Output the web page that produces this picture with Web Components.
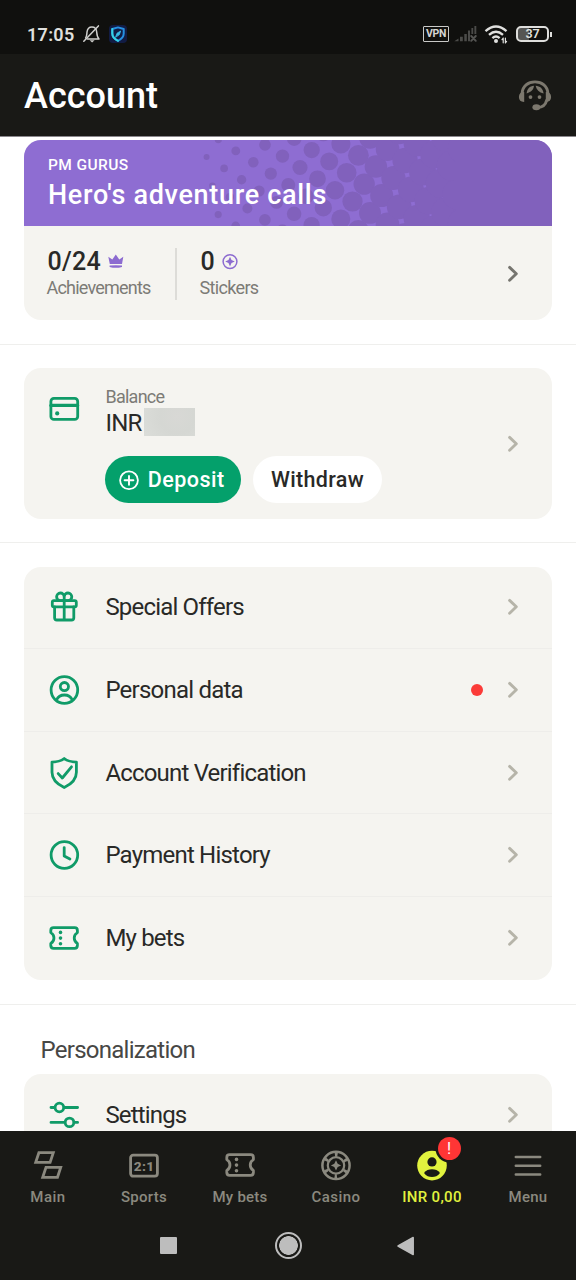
<!DOCTYPE html>
<html lang="en">
<head>
<meta charset="utf-8">
<title>Account</title>
<style>
html,body{margin:0;height:100%;background:#fff}
body{font-family:Roboto,"Open Sans",sans-serif;color:#292927;overflow:hidden}
</style>
</head>
<body>
<account-app></account-app>
<script>
const shadow=(el,html)=>{el.attachShadow({mode:"open"}).innerHTML=html;return el.shadowRoot;};

/* One line of text, tracked so that its advance equals the w attribute. */
customElements.define("ui-text",class extends HTMLElement{
  connectedCallback(){
    if(this.shadowRoot)return;
    const s=this.getAttribute("size"),w=+this.getAttribute("w"),wt=this.getAttribute("weight")||400,lh=this.getAttribute("lh")||s;
    const r=shadow(this,`<style>:host{display:block;flex:none;width:${w}px;height:${lh}px;white-space:nowrap}
      span{display:inline-block;font-size:${s}px;font-weight:${wt};line-height:${lh}px;vertical-align:top;font-kerning:normal}</style><span><slot></slot></span>`);
    const span=r.querySelector("span"),n=this.textContent.length;
    const nat=span.getBoundingClientRect().width;
    span.style.letterSpacing=((w-nat)/n).toFixed(3)+"px";
  }
});

const TICKET='<path d="M5.6 5.6H26.6Q29.4 5.6 29.4 8.4V10.6A6.2 6.2 0 0 0 29.4 21.4V23.6Q29.4 26.4 26.6 26.4H5.6Q2.8 26.4 2.8 23.6V21.4A6.2 6.2 0 0 0 2.8 10.6V8.4Q2.8 5.6 5.6 5.6Z"/><g fill="currentColor" stroke="none"><circle cx="12.5" cy="10.4" r="1.8"/><circle cx="12.5" cy="16.1" r="1.8"/><circle cx="12.5" cy="21.8" r="1.8"/></g>';
const ICONS={
  card:[32,32,'<rect x="2.9" y="5.4" width="26.8" height="21" rx="3"/><path d="M3 12.4H29.5" stroke-width="3.4"/><circle cx="9.2" cy="20.4" r="2.1" fill="currentColor" stroke="none"/>'],
  gift:[32,32,'<rect x="4.3" y="9.7" width="24" height="6.2" rx="1.6"/><path d="M6.6 15.9V26.7Q6.6 29 8.9 29H23.5Q25.8 29 25.8 26.7V15.9M16.2 9.7V29M16.2 9.6H12.2A3.8 3.8 0 1 1 16.2 5.6ZM16.2 9.6H20.2A3.8 3.8 0 1 0 16.2 5.6Z"/>'],
  person:[32,32,'<circle cx="16.4" cy="16" r="13.3"/><circle cx="16.4" cy="12.6" r="4.1"/><path d="M8.6 25.8C10.2 22.2 13 21 16.4 21S22.6 22.2 24.2 25.8"/>'],
  shield:[32,32,'<path d="M16.2 1.5C19.6 4.1 23.7 5 28.4 5.1V15.3C28.4 22.8 23.4 27.2 16.2 30.6C9 27.2 4 22.8 4 15.3V5.1C8.7 5 12.8 4.1 16.2 1.5Z"/><path d="M10.2 16.6L14.3 21L23.5 9.8"/>'],
  clock:[32,32,'<circle cx="16.4" cy="16" r="13.3"/><path d="M16.2 8.6V17L21.9 20.1"/>'],
  ticket:[32,32,TICKET],
  sliders:[32,32,'<path d="M3 8.5H6.7M16.2 8.5H29.6M3 23.4H16.7M26.2 23.4H29.6"/><circle cx="11.4" cy="8.5" r="4.3"/><circle cx="21.5" cy="23.4" r="4.3"/>'],
  chev:[12,18,'<path d="M2.6 2.4L9.3 8.8L2.6 15.2" stroke-width="2.9"/>'],
  crown:[16,16,'<path d="M.3 2.7L4.3 5.4L7.8 .6L11.3 5.4L15.3 2.7L14 10.1H1.8Z" fill="currentColor" stroke="none"/><path d="M1.6 11.6Q7.8 10.7 14 11.6V12.9Q7.8 14.7 1.6 12.9Z" fill="currentColor" stroke="none"/>'],
  sticker:[16,16,'<circle cx="8" cy="7.6" r="6.9" stroke-width="1.5"/><path d="M8 2.8L9.5 6.1L12.8 7.6L9.5 9.1L8 12.4L6.5 9.1L3.2 7.6L6.5 6.1Z" fill="currentColor" stroke="none"/>'],
  plus:[22,22,'<circle cx="11" cy="11.3" r="8.9" stroke-width="1.8"/><path d="M11 6.9V15.7M6.6 11.3H15.4" stroke-width="1.9"/>'],
  main:[32,32,'<path stroke-linejoin="miter" stroke-width="2.8" d="M6.9 3.7H21.3L18.1 13.4H3.7ZM14 18.4H28.7L25.5 28.3H10.7Z"/>'],
  sports:[32,32,'<rect x="2.6" y="6.2" width="26.8" height="21" rx="2.6"/><text x="16.1" y="21.5" text-anchor="middle" font-size="13.6" font-weight="800" letter-spacing=".3" fill="currentColor" stroke="none">2:1</text>'],
  casino:[32,32,'<circle cx="16" cy="16.4" r="13.6" stroke-width="2.5"/><circle cx="16" cy="16.4" r="8.2" stroke-width="2.2"/><circle cx="16" cy="16.4" r="10.9" stroke-width="4" stroke-dasharray="2.8 8.614" stroke-dashoffset="1.4" stroke-linecap="butt" transform="rotate(90 16 16.4)"/><path d="M16 11.3L17.7 14.7L21.1 16.4L17.7 18.1L16 21.5L14.3 18.1L10.9 16.4L14.3 14.7Z" fill="currentColor" stroke="none"/>'],
  user:[32,32,'<circle cx="16" cy="16.6" r="14.8" fill="currentColor" stroke="none"/><circle cx="16" cy="12.9" r="4.6" fill="#191916" stroke="none"/><path d="M8 23.9C10 21.3 12.8 20.3 16 20.3S22 21.3 24 23.9C21.6 26.9 19 27.9 16 27.9S10.4 26.9 8 23.9Z" fill="#191916" stroke="none"/>'],
  menu:[32,32,'<path d="M3.8 7.9H28.2M3.8 16.7H28.2M3.8 25.5H28.2" stroke-width="2.5"/>'],
  bell:[20,20,'<g stroke-width="1.5"><path d="M4.6 13.9C5.9 12.2 5.8 10.5 6 8C6.4 4.8 8.2 3.1 10.9 3.1C13.7 3.1 15.4 4.8 15.7 8C15.9 10.8 16 13 18 15H6.4"/><path d="M2.8 17.3L17.4 1.9"/></g><path d="M8.6 16.3H13.6L11.1 18.4Z" fill="currentColor" stroke="none"/>'],
  guard:[20,20,'<rect x="1" y="1" width="18" height="18" rx="4" fill="#121c44" stroke="none"/><path d="M10 3.4L15.7 5V9.6C15.7 13.1 13.6 15.2 10 16.8C6.4 15.2 4.3 13.1 4.3 9.6V5Z" stroke="#2590e2" stroke-width="2"/><path d="M4.3 5V9.6C4.3 13 6.4 15.2 10 16.8" stroke="#35d4e5" stroke-width="2"/><path d="M7.6 13L9 9.2L12.7 7L11.4 10.5Z" fill="#38bce9" stroke="#38bce9" stroke-width=".8"/>'],
  signal:[24,20,'<g fill="#4b4b49" stroke="none"><path d="M-.7 17.2L3.5 14.6V17.2ZM5 12.8H7.8V17.2H5ZM9.3 10H11.8V17.2H9.3ZM13 6.5H15V17.2H13ZM16.4 4.1H18.2V10H16.4ZM19.4 2H21.3V10H19.4Z"/></g><path d="M16.2 12L20.8 16.8M20.8 12L16.2 16.8" stroke="#555553" stroke-width="1.9"/>'],
  wifi:[26,20,'<g stroke-width="2.3" stroke-linecap="butt"><path d="M1.5 7.2Q12 -2.2 22.5 7.2"/><path d="M5 10.8Q12 4.6 19 10.8"/><path d="M8.4 14.1Q12 10.8 15.6 14.1"/></g><circle cx="12" cy="17" r="2" fill="currentColor" stroke="none"/><path d="M19.2 14V18.8M19.2 14.2L18 15.6M21.4 19V14.2M21.4 18.8L22.6 17.4" stroke-width="1.2"/>'],
  headset:[36,32,'<path d="M5 14.5C5.6 7 11 2.9 18 2.9S30.4 7 31 14.5" stroke-width="2.9"/><g fill="currentColor" stroke="none"><path d="M7.2 13V22.9Q2 23 1.9 18Q2 13.1 7.2 13ZM28.8 13V22.9Q34 23 34.1 18Q34 13.1 28.8 13Z"/><path d="M9.6 14.4C10.2 9.6 12.6 7 16.9 6.7C17 9.8 14.6 13 9.6 14.4ZM18.6 6.7C23 7 26 9.4 26.6 14.6C22.2 13.4 19.4 10.8 18.6 6.7Z"/><circle cx="13.5" cy="18.1" r="1.9"/><circle cx="22.5" cy="18.1" r="1.9"/><ellipse cx="19.4" cy="28.2" rx="4" ry="3"/></g><path d="M29.6 21.5C28.6 25.8 25.6 28.4 20.5 28.5" stroke-width="3"/>'],
};
customElements.define("ui-icon",class extends HTMLElement{
  connectedCallback(){
    if(this.shadowRoot)return;
    const [w,h,d]=ICONS[this.getAttribute("name")];
    shadow(this,`<style>:host{display:block;flex:none;width:${w}px;height:${h}px}svg{display:block;overflow:visible}</style>
    <svg width="${w}" height="${h}" viewBox="0 0 ${w} ${h}" fill="none" stroke="currentColor" stroke-width="2.8" stroke-linecap="round" stroke-linejoin="round">${d}</svg>`);
  }
});

customElements.define("status-bar",class extends HTMLElement{
  connectedCallback(){
    shadow(this,`<style>
    :host{display:flex;box-sizing:border-box;height:54px;background:#10100e;color:#e0e0de;padding:14px 24px 0 27px;align-items:center;flex:none}
    .time{padding-top:1px}
    .bell{margin-left:6px;color:#cfcfcd}.guard{margin-left:7px}
    .vpn{margin-left:auto;box-sizing:border-box;width:26px;height:16px;border:1.5px solid #c9c9c7;border-radius:1px;display:flex;align-items:center;justify-content:center;color:#d5d5d3}
    .sig{margin-left:6px}.wifi{margin-left:5px}
    .bat{margin-left:6px;box-sizing:border-box;width:33px;height:16px;border:2px solid #dededc;border-radius:5px;display:flex;align-items:center;justify-content:center;background:linear-gradient(90deg,#555553 0 11px,#10100e 11px)}
    .nub{width:2px;height:5px;background:#dededc;margin-left:1px}
    </style><ui-text class="time" size="18" weight="600" w="47.5">17:05</ui-text><ui-icon class="bell" name="bell"></ui-icon><ui-icon class="guard" name="guard"></ui-icon>
    <div class="vpn"><ui-text size="10.5" lh="12" weight="700" w="20">VPN</ui-text></div><ui-icon class="sig" name="signal"></ui-icon><ui-icon class="wifi" name="wifi"></ui-icon>
    <div class="bat"><ui-text size="12.5" lh="12" weight="600" w="14">37</ui-text></div><div class="nub"></div>`);
  }
});

customElements.define("page-header",class extends HTMLElement{
  connectedCallback(){
    shadow(this,`<style>:host{display:flex;box-sizing:border-box;height:83px;flex:none;background:#191916;border-bottom:1px solid #8a878c;padding:0 23px 0 24px;align-items:center;justify-content:space-between;color:#fff}
    .t{padding-top:2px}ui-icon{color:#7c786e}</style><div class="t"><slot></slot></div><ui-icon name="headset"></ui-icon>`);
  }
});

customElements.define("stat-item",class extends HTMLElement{
  connectedCallback(){
    shadow(this,`<style>:host{display:grid;row-gap:4px;align-content:start;padding-top:1px}
    .v{display:flex;align-items:center;gap:7px;height:25px;padding-left:1px}ui-icon{color:#8c6bd0}.l{color:#7c7b76}</style>
    <div class="v"><slot name="value"></slot><ui-icon name="${this.getAttribute("icon")}"></ui-icon></div><div class="l"><slot></slot></div>`);
  }
});

customElements.define("half-tone",class extends HTMLElement{
  connectedCallback(){
    let dots="";
    for(let i=-12;i<22;i++)for(let j=-12;j<22;j++){
      const x=182.6+i*29.2+j*17.5,y=17-6.1*i+11.35*j;
      if(x<181||x>445||y<-14||y>100)continue;
      dots+=`<circle cx="${x.toFixed(1)}" cy="${y.toFixed(1)}" r="${(3+(x-183)*.0488).toFixed(2)}"/>`;
    }
    shadow(this,`<style>:host{display:block;overflow:hidden}svg{display:block}</style><svg width="529" height="86" fill="#8161bc">${dots}<rect x="432" width="97" height="86"/></svg>`);
  }
});

customElements.define("promo-card",class extends HTMLElement{
  connectedCallback(){
    shadow(this,`<style>:host{display:block;height:180px;border-radius:17px;overflow:hidden;background:#f5f4f0}
    .b{height:86px;background:#8e6dd2;color:#fff;position:relative}
    half-tone{position:absolute;inset:0}
    .t{position:relative;padding:16px 0 0 24px;display:grid;row-gap:6px}
    .s{display:flex;padding-top:22px;padding-right:33px}
    .s>.a{padding-left:22.5px;width:128.5px}
    .ln{width:1.5px;height:52px;background:#dddcd8;margin-right:23px}
    ui-icon{margin:17px 0 0 auto;color:#76756f}</style>
    <div class="b"><half-tone></half-tone><div class="t"><slot name="eyebrow"></slot><slot name="title"></slot></div></div>
    <div class="s"><div class="a"><slot name="first"></slot></div><div class="ln"></div><slot name="second"></slot><ui-icon name="chev"></ui-icon></div>`);
  }
});

customElements.define("balance-card",class extends HTMLElement{
  connectedCallback(){
    shadow(this,`<style>:host{display:flex;box-sizing:border-box;height:151px;border-radius:17px;background:#f5f4f0;padding:0 33px 0 24px}
    .i{margin-top:25px;color:#109b68}.m{margin-left:25.4px;padding-top:20px}
    .lab{color:#7c7b76}.amt{display:flex;align-items:center;height:28px;gap:2px;margin-top:2px}
    .amt slot{display:block;padding-top:2px}
    .mask{width:51px;height:28px;background:radial-gradient(circle at 65% 30%,#d8d8d5,#d5d7d3 45%,#dbddd9 100%)}
    .btns{display:flex;gap:12px;margin-top:20px}
    .c{margin:67px 0 0 auto;color:#b6b4a9}</style>
    <ui-icon class="i" name="card"></ui-icon><div class="m"><div class="lab"><slot name="label"></slot></div>
    <div class="amt"><slot name="amount"></slot><div class="mask"></div></div><div class="btns"><slot></slot></div></div><ui-icon class="c" name="chev"></ui-icon>`);
  }
});

customElements.define("pill-button",class extends HTMLElement{
  connectedCallback(){
    const p=this.hasAttribute("primary");
    shadow(this,`<style>:host{display:flex;box-sizing:border-box;align-items:center;justify-content:center;height:47px;width:${p?135.6:129}px;border-radius:24px;background:${p?"#04a06b":"#fff"};color:${p?"#fff":"#292927"};gap:8px;padding:0 ${p?4:0}px 0 0}</style>
    ${p?'<ui-icon name="plus"></ui-icon>':''}<slot></slot>`);
  }
});

customElements.define("menu-row",class extends HTMLElement{
  connectedCallback(){
    shadow(this,`<style>:host{display:flex;box-sizing:border-box;height:82.6px;align-items:center;padding:0 33px 0 24px;border-bottom:1px solid #eeedea}
    :host(:last-child){border-bottom:0}.i{color:#109b68;margin-right:25.4px}.c{color:#b6b4a9}
    .r{margin-left:auto;display:flex;align-items:center;gap:24px}.dot{width:12px;height:12px;border-radius:50%;background:#fb3b38}</style>
    <ui-icon class="i" name="${this.getAttribute("icon")}"></ui-icon><slot></slot><div class="r">${this.hasAttribute("alert")?'<div class="dot"></div>':''}<ui-icon class="c" name="chev"></ui-icon></div>`);
  }
});

customElements.define("menu-list",class extends HTMLElement{
  connectedCallback(){shadow(this,`<style>:host{display:block;border-radius:17px;background:#f5f4f0;overflow:hidden}</style><slot></slot>`);}
});

customElements.define("page-section",class extends HTMLElement{
  connectedCallback(){shadow(this,`<style>:host{display:block;padding:23px 23.6px 24px 24px;border-bottom:1px solid #efefed}:host([first]){padding-top:3px}:host([tight]){padding-bottom:23px}:host([loose]){padding-top:23.6px}:host([last]){border:0;padding-top:22.4px}</style><slot></slot>`);}
});

customElements.define("nav-item",class extends HTMLElement{
  connectedCallback(){
    const a=this.hasAttribute("active");
    shadow(this,`<style>:host{display:flex;flex-direction:column;align-items:center;width:96px;padding-top:18px;gap:9px;color:${a?"#e1f23e":"#8b897f"}}
    .w{position:relative}.badge{position:absolute;left:22px;top:-12px;width:23px;height:23px;border-radius:50%;background:#ff3535;box-shadow:0 0 0 2.5px #191916;display:grid;place-items:center;color:#fff}</style>
    <div class="w"><ui-icon name="${this.getAttribute("icon")}"></ui-icon>${a?'<div class="badge"><ui-text size="16" w="5">!</ui-text></div>':''}</div><slot></slot>`);
  }
});

customElements.define("bottom-nav",class extends HTMLElement{
  connectedCallback(){
    shadow(this,`<style>:host{display:block;flex:none;height:149px;background:#191916}
    .n{display:flex;height:81px}.sys{box-sizing:border-box;display:flex;justify-content:center;align-items:center;height:67px;padding-right:3px;gap:95px}
    .sq{width:17px;height:17px;background:#bdbdbd;border-radius:1px;margin-left:1px}
    .ci{box-sizing:border-box;width:27px;height:27px;border-radius:50%;border:2px solid #bdbdbd;background:radial-gradient(circle,#bdbdbd 9px,#191916 9.6px);margin-left:3px}
    svg{display:block}</style>
    <div class="n"><slot></slot></div><div class="sys"><div class="sq"></div><div class="ci"></div><svg width="18" height="20"><path d="M16.2 1.5V18.5L1 10Z" fill="#bdbdbd" stroke="#bdbdbd" stroke-width="1.5" stroke-linejoin="round"/></svg></div>`);
  }
});

customElements.define("account-app",class extends HTMLElement{
  connectedCallback(){
    shadow(this,`<style>:host{display:flex;flex-direction:column;width:576px;height:1280px;overflow:hidden;background:#fff}
    main{flex:1;min-height:0;overflow:hidden}
    .h{color:#474745;padding:11px 0 12px 16.5px}</style>
    <status-bar></status-bar>
    <page-header><ui-text size="36" lh="42" weight="500" w="134">Account</ui-text></page-header>
    <main>
      <page-section first><promo-card>
        <ui-text slot="eyebrow" size="15.5" lh="19" weight="500" w="80.5">PM GURUS</ui-text>
        <ui-text slot="title" size="27" lh="28" weight="500" w="279">Hero's adventure calls</ui-text>
        <stat-item slot="first" icon="crown"><ui-text slot="value" size="25" weight="500" w="53.5">0/24</ui-text><ui-text size="18" lh="20" w="104">Achievements</ui-text></stat-item>
        <stat-item slot="second" icon="sticker"><ui-text slot="value" size="25" weight="500" w="14">0</ui-text><ui-text size="18" lh="20" w="59">Stickers</ui-text></stat-item>
      </promo-card></page-section>
      <page-section tight><balance-card>
        <ui-text slot="label" size="18" w="59">Balance</ui-text><ui-text slot="amount" size="24" w="36.2">INR</ui-text>
        <pill-button primary><ui-text size="21.5" lh="24" weight="500" w="77">Deposit</ui-text></pill-button>
        <pill-button><ui-text size="21.5" lh="24" weight="500" w="93">Withdraw</ui-text></pill-button>
      </balance-card></page-section>
      <page-section loose><menu-list>
        <menu-row icon="gift"><ui-text size="24" lh="28" w="138.5">Special Offers</ui-text></menu-row>
        <menu-row icon="person" alert><ui-text size="24" lh="28" w="137.5">Personal data</ui-text></menu-row>
        <menu-row icon="shield"><ui-text size="24" lh="28" w="199.5">Account Verification</ui-text></menu-row>
        <menu-row icon="clock"><ui-text size="24" lh="28" w="164.5">Payment History</ui-text></menu-row>
        <menu-row icon="ticket"><ui-text size="24" lh="28" w="79">My bets</ui-text></menu-row>
      </menu-list></page-section>
      <page-section last><div class="h"><ui-text size="24" w="154.5">Personalization</ui-text></div>
        <menu-list><menu-row icon="sliders"><ui-text size="24" lh="28" w="81">Settings</ui-text></menu-row></menu-list></page-section>
    </main>
    <bottom-nav>
      <nav-item icon="main"><ui-text size="15" weight="500" w="35.5">Main</ui-text></nav-item>
      <nav-item icon="sports"><ui-text size="15" weight="500" w="46">Sports</ui-text></nav-item>
      <nav-item icon="ticket"><ui-text size="15" weight="500" w="55">My bets</ui-text></nav-item>
      <nav-item icon="casino"><ui-text size="15" weight="500" w="49">Casino</ui-text></nav-item>
      <nav-item icon="user" active><ui-text size="15" weight="500" w="59.5">INR 0,00</ui-text></nav-item>
      <nav-item icon="menu"><ui-text size="15" weight="500" w="39">Menu</ui-text></nav-item>
    </bottom-nav>`);
  }
});
</script>
</body>
</html>
